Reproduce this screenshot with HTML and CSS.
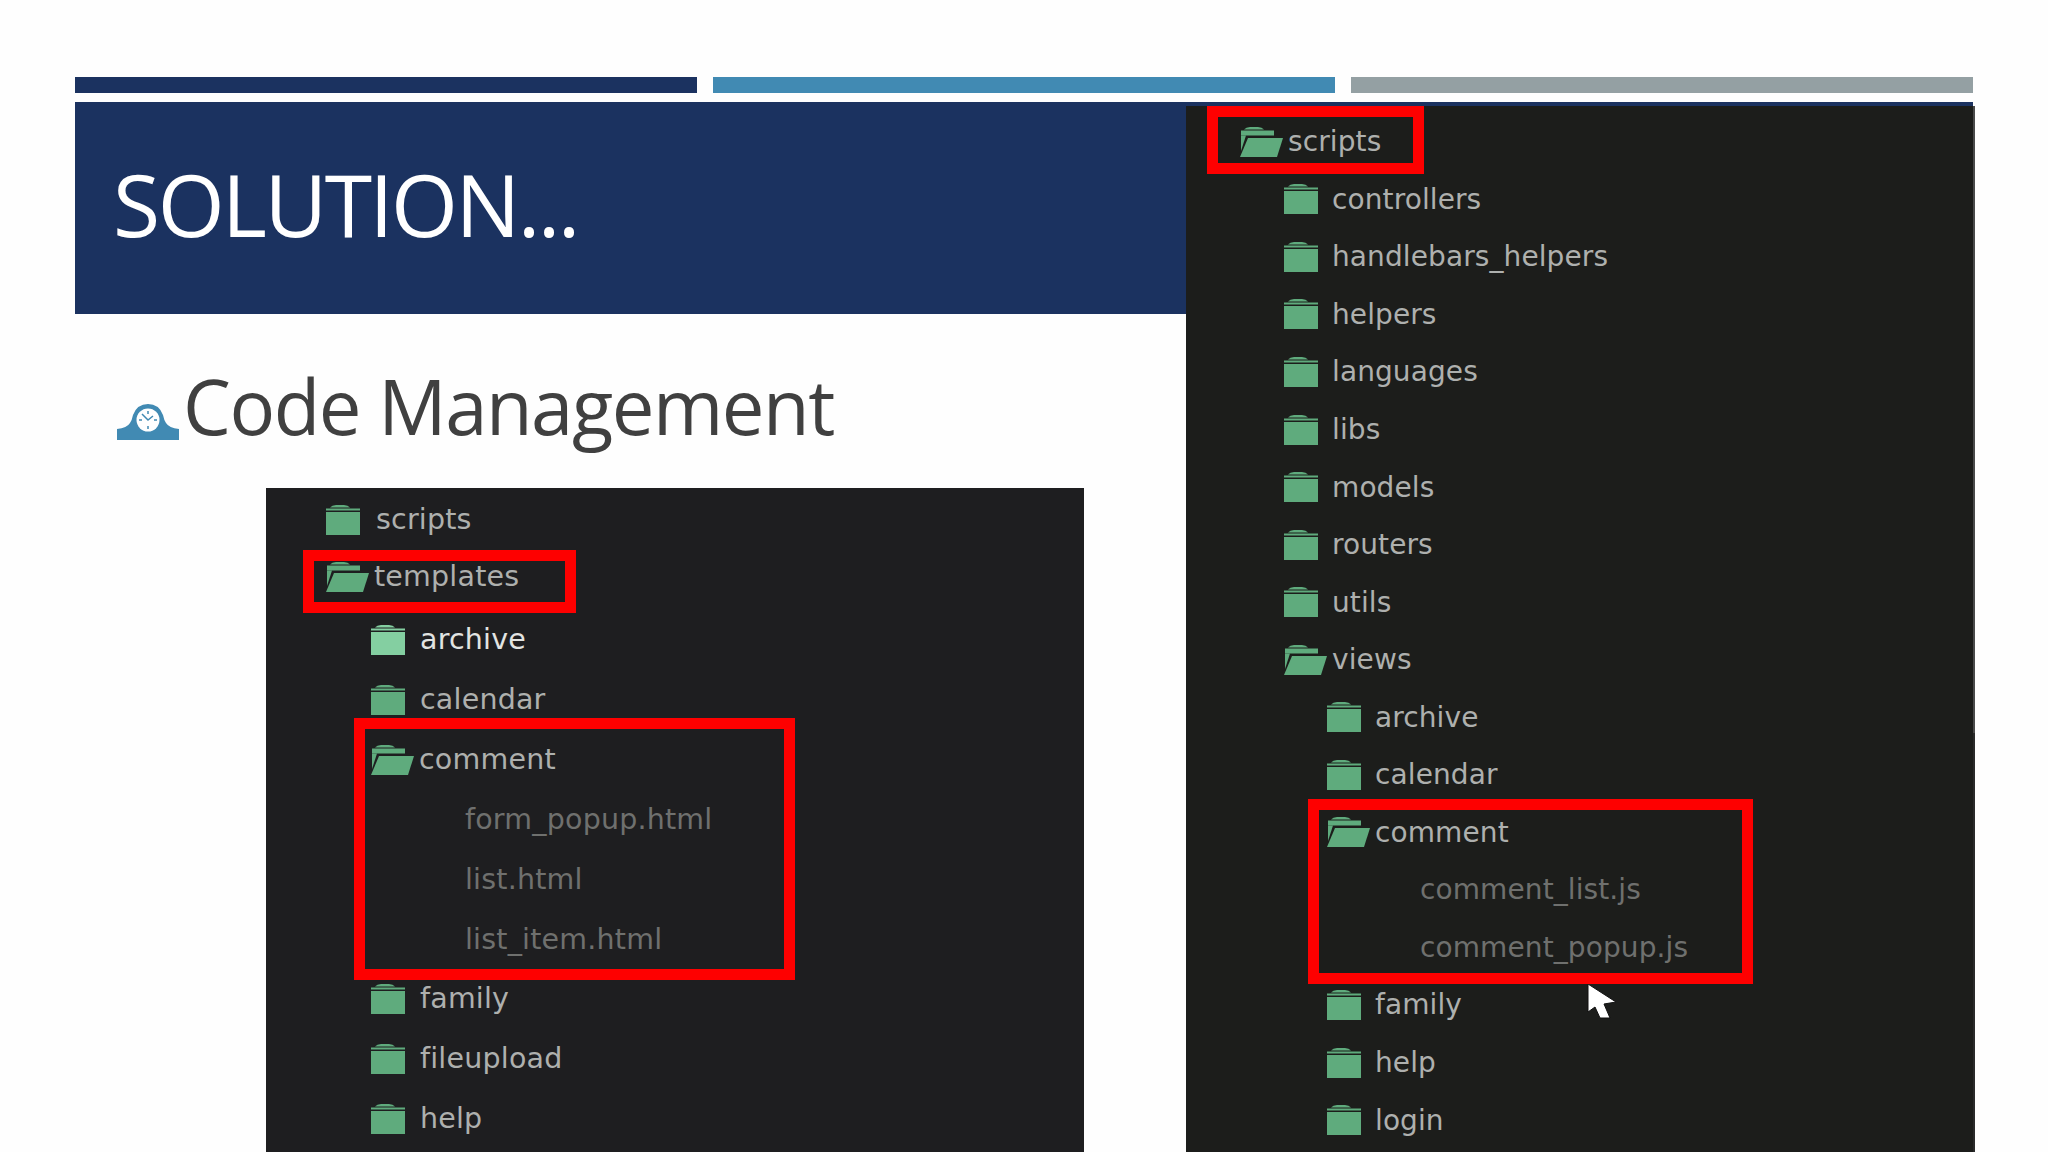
FILE: index.html
```html
<!DOCTYPE html>
<html lang="en">
<head>
<meta charset="utf-8">
<title>Solution...</title>
<link rel="stylesheet" href="styles.css">
</head>
<body>
<svg class="defs" width="0" height="0" aria-hidden="true">
  <symbol id="closed" viewBox="0 0 34 30">
    <path d="M4 2.5Q6 0 10 0H18Q22 0 24 2.5Z"/>
    <rect x="0" y="3.5" width="34" height="2"/>
    <rect x="0" y="7" width="34" height="23"/>
  </symbol>
  <symbol id="open" viewBox="0 0 43 30">
    <path d="M4 2.5Q6 0 10 0H18Q22 0 24 2.5Z"/>
    <rect x="1" y="3.5" width="33" height="5"/>
    <path d="M1 8.5H6L1 24Z"/>
    <path d="M8 11H43L37 30H0Z"/>
  </symbol>
</svg>

<main class="slide">
  <div class="bars">
    <div class="bar bar-navy"></div>
    <div class="bar bar-blue"></div>
    <div class="bar bar-gray"></div>
  </div>

  <header class="title-band">
    <h1 class="title">SOLUTION...</h1>
  </header>

  <div class="bullet">
    <svg class="clock" viewBox="0 0 62 36">
      <path class="clock-body" d="M0 36V25Q10 24 13 19Q15 16 16 11Q20 0 31 0Q42 0 46 11Q47 16 49 19Q52 24 62 25V36Z"/>
      <circle class="clock-face" cx="31" cy="16" r="11.5"/>
      <path class="clock-hands" d="M31 7V10M31 22V25M22 16H25M37 16H40M25 10L31 16L36 12"/>
    </svg>
    <span class="bullet-text">Code Management</span>
  </div>

  <section class="shot shot-left">
    <div class="row lvl0 tight"><svg class="ic"><use href="#closed"/></svg><span>scripts</span></div>
    <div class="row lvl0 tight open-row"><svg class="ic-open"><use href="#open"/></svg><span>templates</span></div>
    <div class="group">
      <div class="row lvl1 hot"><svg class="ic"><use href="#closed"/></svg><span>archive</span></div>
      <div class="row lvl1"><svg class="ic"><use href="#closed"/></svg><span>calendar</span></div>
      <div class="row lvl1 open-row"><svg class="ic-open"><use href="#open"/></svg><span>comment</span></div>
      <div class="row file lvl2">form_popup.html</div>
      <div class="row file lvl2">list.html</div>
      <div class="row file lvl2">list_item.html</div>
      <div class="row lvl1"><svg class="ic"><use href="#closed"/></svg><span>family</span></div>
      <div class="row lvl1"><svg class="ic"><use href="#closed"/></svg><span>fileupload</span></div>
      <div class="row lvl1"><svg class="ic"><use href="#closed"/></svg><span>help</span></div>
    </div>
    <div class="box box-templates"></div>
    <div class="box box-comment-left"></div>
  </section>

  <section class="shot shot-right">
    <div class="scrollbar"></div>
    <div class="row open-row"><svg class="ic-open"><use href="#open"/></svg><span>scripts</span></div>
    <div class="row lvl1"><svg class="ic"><use href="#closed"/></svg><span>controllers</span></div>
    <div class="row lvl1"><svg class="ic"><use href="#closed"/></svg><span>handlebars_helpers</span></div>
    <div class="row lvl1"><svg class="ic"><use href="#closed"/></svg><span>helpers</span></div>
    <div class="row lvl1"><svg class="ic"><use href="#closed"/></svg><span>languages</span></div>
    <div class="row lvl1"><svg class="ic"><use href="#closed"/></svg><span>libs</span></div>
    <div class="row lvl1"><svg class="ic"><use href="#closed"/></svg><span>models</span></div>
    <div class="row lvl1"><svg class="ic"><use href="#closed"/></svg><span>routers</span></div>
    <div class="row lvl1"><svg class="ic"><use href="#closed"/></svg><span>utils</span></div>
    <div class="row lvl1 open-row"><svg class="ic-open"><use href="#open"/></svg><span>views</span></div>
    <div class="row lvl2"><svg class="ic"><use href="#closed"/></svg><span>archive</span></div>
    <div class="row lvl2"><svg class="ic"><use href="#closed"/></svg><span>calendar</span></div>
    <div class="row lvl2 open-row"><svg class="ic-open"><use href="#open"/></svg><span>comment</span></div>
    <div class="row file lvl3">comment_list.js</div>
    <div class="row file lvl3">comment_popup.js</div>
    <div class="row lvl2"><svg class="ic"><use href="#closed"/></svg><span>family</span></div>
    <div class="row lvl2"><svg class="ic"><use href="#closed"/></svg><span>help</span></div>
    <div class="row lvl2"><svg class="ic"><use href="#closed"/></svg><span>login</span></div>
    <div class="box box-scripts"></div>
    <div class="box box-comment-right"></div>
    <svg class="cursor" viewBox="0 0 30 35">
      <path d="M1 0V28L8 23L13 34L23 34L17 20L29 18Z"/>
    </svg>
  </section>
</main>
</body>
</html>
```

FILE: styles.css
```css
* { box-sizing: border-box; }

html, body {
  margin: 0;
  height: 1152px;
  overflow: hidden;
  background: #fefefe;
}

.defs { position: absolute; }

.slide {
  position: relative;
  height: 1152px;
  padding: 77px 75px 0;
  overflow: hidden;
  font-family: "Open Sans", "Noto Sans", sans-serif;
}

.bars {
  display: flex;
  gap: 15.5px;
}

.bar { flex: 1; height: 16px; }
.bar-navy { background: #1b3260; }
.bar-blue { background: #418ab3; }
.bar-gray { background: #94a0a3; }

.title-band {
  height: 212px;
  margin-top: 9px;
  padding: 48px 0 0 38px;
  background: #1b3260;
}

.title {
  margin: 0;
  color: #fff;
  font-size: 86px;
  font-weight: 370;
  line-height: 108px;
  letter-spacing: -2.5px;
}

.bullet {
  display: flex;
  align-items: flex-end;
  height: 110px;
  margin-top: 37px;
  padding-left: 42px;
  gap: 4px;
}

.clock { width: 62px; height: 36px; margin-bottom: 21px; }
.clock-body { fill: #418ab3; }
.clock-face { fill: #fff; }
.clock-hands { fill: none; stroke: #418ab3; stroke-width: 1.5; }

.bullet-text {
  color: #404040;
  font-size: 76px;
  font-weight: 370;
  line-height: 110px;
  letter-spacing: -1.45px;
}

.shot {
  color: #aeb0ae;
  background: #1e1e20;
  font-family: "DejaVu Sans", sans-serif;
}

.shot-left {
  position: relative;
  width: 818px;
  height: 700px;
  margin: 27px 0 0 191px;
  padding-top: 3px;
  font-size: 28.5px;
  letter-spacing: 0.2px;
}

.shot-right {
  position: absolute;
  top: 106px;
  left: 1186px;
  width: 789px;
  height: 1046px;
  padding-top: 7px;
  padding-left: 54px;
  background: #1c1d1b;
  border-right: 2px solid #2a2a2a;
  font-size: 28px;
  letter-spacing: 0.1px;
}

.scrollbar {
  position: absolute;
  top: 0;
  right: -2px;
  width: 2px;
  height: 627px;
  background: #4a4a4a;
}

.row {
  display: flex;
  align-items: center;
  height: 57.55px;
  gap: 14px;
  white-space: nowrap;
}

.shot-left .row { height: 59.85px; gap: 15px; }
.shot-left .row.tight { height: 57px; padding-left: 60px; gap: 16px; }
.shot-left .group { padding-top: 5px; }
.shot-left .lvl1 { padding-left: 105px; }
.shot-left .lvl2 { padding-left: 199px; }

.shot-right .lvl1 { padding-left: 44px; }
.shot-right .lvl2 { padding-left: 87px; }
.shot-right .lvl3 { padding-left: 180px; }

.ic, .ic-open { flex: none; height: 30px; fill: #5fab7d; }
.ic { width: 34px; }
.ic-open { width: 43px; }
.shot .row.open-row { gap: 5px; }

.file { color: #6f706e; }
.hot { color: #e2e4e2; }
.hot .ic { fill: #84cfa1; }

.box {
  position: absolute;
  border: 11px solid #fe0000;
}

.box-templates { left: 37px; top: 62px; width: 273px; height: 63px; }
.box-comment-left { left: 88px; top: 230px; width: 441px; height: 262px; }
.box-scripts { left: 21px; top: 0; width: 217px; height: 68px; }
.box-comment-right { left: 122px; top: 693px; width: 445px; height: 185px; }

.cursor {
  position: absolute;
  left: 401px;
  top: 878px;
  width: 30px;
  height: 35px;
  fill: #fff;
  stroke: #111;
  stroke-width: 1;
}
```
